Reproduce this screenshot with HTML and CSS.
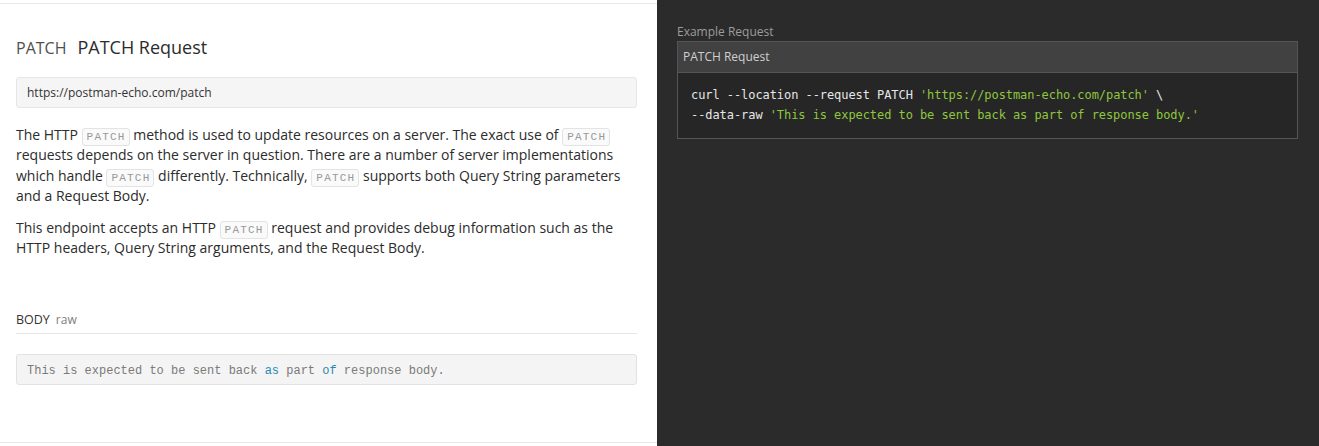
FILE: index.html
```html
<!DOCTYPE html>
<html>
<head>
<meta charset="utf-8">
<link rel="stylesheet" href="styles.css">
</head>
<body>
<div class="page">
  <div class="doc-wrap">
    <section class="doc">
      <h2 class="title"><span class="method">PATCH</span><span class="name">PATCH Request</span></h2>
      <div class="url">https://postman-echo.com/patch</div>
      <div class="desc">
        <p>The HTTP <code>PATCH</code> method is used to update resources on a server. The exact use of <code>PATCH</code> requests depends on the server in question. There are a number of server implementations which handle <code>PATCH</code> differently. Technically, <code>PATCH</code> supports both Query String parameters and a Request Body.</p>
        <p>This endpoint accepts an HTTP <code>PATCH</code> request and provides debug information such as the HTTP headers, Query String arguments, and the Request Body.</p>
      </div>
      <div class="body-head"><span class="body-label">BODY</span><span class="body-type">raw</span></div>
      <pre class="body-code">This is expected to be sent back <span class="kw">as</span> part <span class="kw">of</span> response body.</pre>
    </section>
  </div>
  <aside class="example">
    <div class="ex-label">Example Request</div>
    <div class="ex-box">
      <div class="ex-head">PATCH Request</div>
      <pre class="ex-code">curl --location --request PATCH <span class="str">'https://postman-echo.com/patch'</span> \
--data-raw <span class="str">'This is expected to be sent back as part of response body.'</span></pre>
    </div>
  </aside>
</div>
</body>
</html>
```

FILE: styles.css
```css
html, body {
  margin: 0;
  padding: 0;
  height: 100%;
}
body {
  font-family: "Open Sans", "Liberation Sans", sans-serif;
  color: #282828;
  background: #2b2b2b;
}
.page {
  display: flex;
  height: 446px;
}
.doc-wrap {
  width: 657px;
  background: #fff;
  padding: 3px 0;
  box-sizing: border-box;
  display: flex;
  flex-direction: column;
}
.doc {
  flex: 1;
  border-top: 1px solid #e8e8e8;
  border-bottom: 1px solid #e8e8e8;
  padding: 31px 20px 0 16px;
}
.title {
  margin: 0;
  font-weight: 400;
  font-size: 18px;
  line-height: 24px;
  display: flex;
  align-items: baseline;
  color: #2c2c2c;
}
.method {
  font-size: 16px;
  color: #505050;
  margin-right: 11px;
}
.url {
  margin-top: 17px;
  height: 31px;
  box-sizing: border-box;
  background: #f5f5f5;
  border: 1px solid #e6e6e6;
  border-radius: 3px;
  padding: 0 10px;
  font-size: 12px;
  line-height: 29px;
  color: #333;
}
.desc {
  margin-top: 17px;
  font-size: 14px;
  line-height: 20.3px;
  color: #2c2c2c;
}
.desc p {
  margin: 0 0 12px;
}
.desc code {
  font-family: "Liberation Mono", monospace;
  font-size: 11px;
  letter-spacing: 1.2px;
  line-height: 1;
  color: #999;
  background: #fafafa;
  border: 1px solid #e3e3e3;
  border-radius: 3px;
  padding: 2px 3px 2px 4px;
}
.body-head {
  margin-top: 52px;
  padding-bottom: 4px;
  border-bottom: 1px solid #e6e6e6;
  font-size: 12px;
  line-height: 18px;
}
.body-label {
  color: #333;
  font-size: 12.5px;
  margin-right: 6px;
}
.body-type {
  color: #808080;
}
.body-code {
  margin: 20px 0 0;
  height: 31px;
  box-sizing: border-box;
  background: #f4f4f4;
  border: 1px solid #e2e2e2;
  border-radius: 3px;
  padding: 2px 10px 0;
  font-family: "Liberation Mono", monospace;
  font-size: 12px;
  line-height: 28px;
  color: #7a7a7a;
}
.kw {
  color: #2a89b3;
}
.example {
  flex: 1;
  background: #2b2b2b;
  padding: 23px 21px 0 20px;
}
.ex-label {
  font-size: 12px;
  line-height: 17px;
  color: #9c9c9c;
  margin-bottom: 1px;
}
.ex-box {
  border: 1px solid #555;
  background: #262626;
}
.ex-head {
  background: #414141;
  border-bottom: 1px solid #555;
  height: 30px;
  line-height: 29px;
  padding: 0 5px;
  font-size: 12px;
  color: #d0d0d0;
}
.ex-code {
  margin: 0;
  padding: 12px 13px 13px;
  font-family: "DejaVu Sans Mono", monospace;
  font-size: 12px;
  letter-spacing: -0.07px;
  line-height: 20px;
  color: #e6e6e6;
}
.str {
  color: #8ec73f;
}
```
